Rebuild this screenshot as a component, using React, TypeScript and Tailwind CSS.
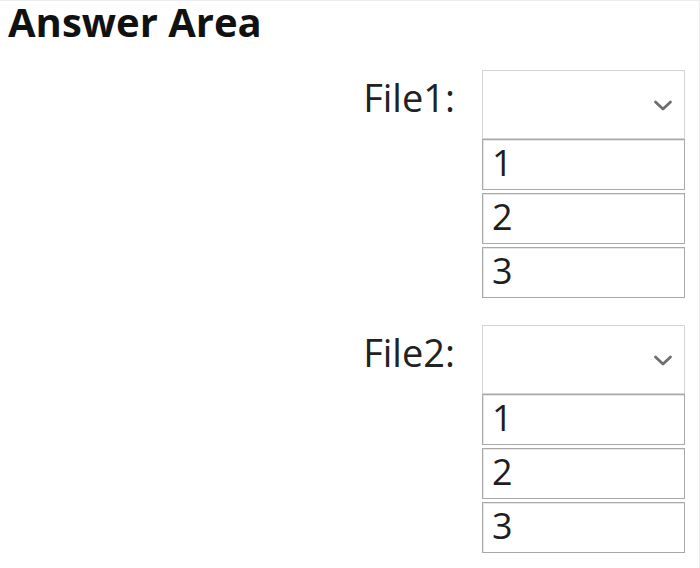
import React from 'react';

const OPTIONS = ['1', '2', '3'];

function Chevron() {
  return (
    <svg width="22" height="13" viewBox="0 0 22 13" fill="none">
      <path d="M3.5 3 L11 10 L18.5 3" stroke="#6e6e6e" strokeWidth="2.8" strokeLinecap="round" strokeLinejoin="round" />
    </svg>
  );
}

function DropdownGroup({ label }: { label: string }) {
  return (
    <div className="flex justify-end gap-[27px]">
      {/* Label */}
      <div className="mt-[8px] text-[38px] leading-none text-[#222]">{label}</div>

      {/* Select + opened list */}
      <div className="flex w-[203px] flex-col">
        <div className="flex h-[69px] items-center justify-end border border-[#d4d4d4] bg-white pr-[10px] pt-[2px]">
          <Chevron />
        </div>
        <div className="flex flex-col gap-[3px]">
          {OPTIONS.map((opt) => (
            <div
              key={opt}
              className="h-[51px] border border-[#a9a9a9] pl-[9px] pt-[5px] text-[36px] leading-none text-[#1e1e1e] shadow-[inset_1px_1px_0_#e6e6e6]"
            >
              {opt}
            </div>
          ))}
        </div>
      </div>
    </div>
  );
}

export default function App() {
  return (
    <div
      className="h-[568px] w-[700px] border-r border-t border-[#ececec] bg-white pr-[14px]"
      style={{ fontFamily: '"Open Sans", "Noto Sans", sans-serif' }}
    >
      <h1 className="pl-[8px] pt-[1px] text-[40px] font-bold leading-none text-[#111]">Answer Area</h1>

      <div className="mt-[28px] flex flex-col gap-[27px]">
        <DropdownGroup label="File1:" />
        <DropdownGroup label="File2:" />
      </div>
    </div>
  );
}
